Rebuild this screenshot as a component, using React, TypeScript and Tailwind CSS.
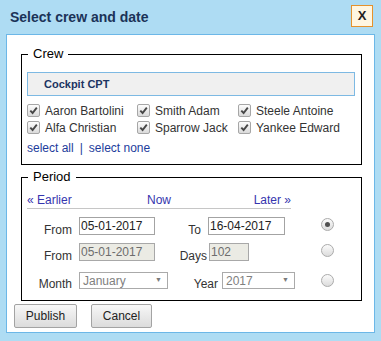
import React from 'react';

const crew = [
  'Aaron Bartolini',
  'Smith Adam',
  'Steele Antoine',
  'Alfa Christian',
  'Sparrow Jack',
  'Yankee Edward',
];

const CheckBox: React.FC = () => (
  <span className="w-[13px] h-[13px] shrink-0 rounded-[2px] border border-[#a6a6a6] bg-gradient-to-b from-[#fdfdfd] to-[#dadada] flex items-center justify-center">
    <svg width="9" height="9" viewBox="0 0 9 9">
      <path d="M1.3 4.6 L3.6 7 L7.8 1.6" fill="none" stroke="#474747" strokeWidth="1.9" />
    </svg>
  </span>
);

const Radio: React.FC<{ checked?: boolean }> = ({ checked }) => (
  <span className="w-[13px] h-[13px] shrink-0 rounded-full border border-[#ababab] bg-gradient-to-b from-[#fbfbfb] to-[#dcdcdc] flex items-center justify-center">
    {checked && <span className="w-[5px] h-[5px] rounded-full bg-[#4f4f4f]" />}
  </span>
);

const Select: React.FC<{ value: string; width: string }> = ({ value, width }) => (
  <div
    className={`${width} h-[17px] border border-[#aaaaaa] bg-white flex items-center justify-between pl-[3px] pr-[5px] text-[#808080]`}
  >
    <span>{value}</span>
    <span className="text-[7px] text-[#7a7a7a]">▼</span>
  </div>
);

const Label: React.FC<{ width: string; children: React.ReactNode }> = ({ width, children }) => (
  <span className={`${width} shrink-0 text-right self-end leading-[12px] mb-[-1px] text-[#333]`}>{children}</span>
);

export default function App() {
  return (
    <div className="w-[381px] h-[341px] bg-[#aedcf3] font-['Liberation_Sans',Arial,sans-serif] text-[12px] text-[#333]">
      {/* Title bar */}
      <div className="h-[34px] flex items-start justify-between pl-[10px] pr-[8px]">
        <span className="mt-[9px] leading-[16px] text-[14px] font-bold text-[#1b3358]">Select crew and date</span>
        <button className="mt-[5px] w-[22px] h-[22px] border border-[#e5922c] bg-[#fff6e1] flex items-center justify-center text-[13px] font-bold text-[#222]">
          X
        </button>
      </div>

      {/* Content panel */}
      <div className="mx-[6px] h-[299px] border border-[#6cb7e7] bg-white pl-[7px] pt-[11px]">
        {/* Crew */}
        <fieldset className="ml-[7px] w-[341px] border border-black pl-[5px] pt-[10px] pb-[8px]">
          <legend className="ml-[1px] px-[5px] text-[13px] leading-[16px] text-black">Crew</legend>
          <div className="w-[328px] h-[24px] border border-[#7db9e3] bg-[#f0f0f0] pl-[16px] flex items-center text-[11px] font-bold text-[#1c3462]">
            Cockpit CPT
          </div>
          <div className="mt-[6px] grid grid-cols-[110px_101px_1fr]">
            {crew.map((name) => (
              <label key={name} className="h-[17px] flex items-center">
                <CheckBox />
                <span className="ml-[5px]">{name}</span>
              </label>
            ))}
          </div>
          <div className="mt-[3px] h-[17px] flex items-center text-[#1d3c9c]">
            <span>select all</span>
            <span className="mx-[6px]">|</span>
            <span>select none</span>
          </div>
        </fieldset>

        {/* Period */}
        <fieldset className="ml-[7px] mt-[4px] w-[341px] border border-black pl-[5px] pt-[6px] pb-[11px]">
          <legend className="ml-[1px] px-[5px] text-[13px] leading-[16px] text-black">Period</legend>
          <div className="w-[264px] h-[18px] grid grid-cols-3 items-center border-b border-[#c6c6c6] text-[#3535ae]">
            <span>« Earlier</span>
            <span className="text-center">Now</span>
            <span className="text-right">Later »</span>
          </div>

          <div className="mt-[8px] h-[18px] flex items-center">
            <Label width="w-[45px]">From</Label>
            <input
              readOnly
              value="05-01-2017"
              className="ml-[7px] w-[76px] h-[18px] border border-[#a3a3a3] px-[1px] text-[12px] text-[#222] outline-none"
            />
            <Label width="w-[46px]">To</Label>
            <input
              readOnly
              value="16-04-2017"
              className="ml-[7px] w-[77px] h-[18px] border border-[#a3a3a3] px-[1px] text-[12px] text-[#222] outline-none"
            />
            <span className="ml-[36px] mb-[3px]">
              <Radio checked />
            </span>
          </div>

          <div className="mt-[8px] h-[18px] flex items-center">
            <Label width="w-[45px]">From</Label>
            <input
              readOnly
              value="05-01-2017"
              className="ml-[7px] w-[76px] h-[18px] border border-[#a8a8a8] bg-[#ebebe4] px-[1px] text-[12px] text-[#6d6d6d] outline-none"
            />
            <Label width="w-[52px]">Days</Label>
            <input
              readOnly
              value="102"
              className="ml-[2px] w-[40px] h-[18px] border border-[#a8a8a8] bg-[#ebebe4] px-[1px] text-[12px] text-[#6d6d6d] outline-none"
            />
            <span className="ml-[72px] mb-[3px]">
              <Radio />
            </span>
          </div>

          <div className="mt-[11px] h-[17px] flex items-center">
            <Label width="w-[45px]">Month</Label>
            <span className="ml-[7px]">
              <Select value="January" width="w-[89px]" />
            </span>
            <Label width="w-[50px]">Year</Label>
            <span className="ml-[4px]">
              <Select value="2017" width="w-[73px]" />
            </span>
            <span className="ml-[26px]">
              <Radio />
            </span>
          </div>
        </fieldset>

        {/* Buttons */}
        <div className="mt-[3px] flex items-center">
          <button className="w-[63px] h-[24px] border border-[#a3a3a3] rounded-[2px] bg-gradient-to-b from-[#f7f7f7] to-[#dcdcdc] text-[12px] text-[#222]">
            Publish
          </button>
          <button className="ml-[14px] w-[61px] h-[24px] border border-[#a3a3a3] rounded-[2px] bg-gradient-to-b from-[#f7f7f7] to-[#dcdcdc] text-[12px] text-[#222]">
            Cancel
          </button>
        </div>
      </div>
    </div>
  );
}
